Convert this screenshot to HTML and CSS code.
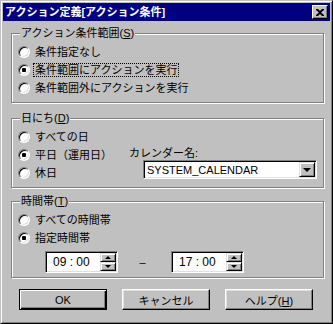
FILE: index.html
```html
<!DOCTYPE html>
<html lang="ja">
<head>
    <meta charset="UTF-8">
    <title>アクション定義[アクション条件]</title>
    <link rel="stylesheet" href="styles.css">
</head>
<body>

<div class="window">
    <div class="titlebar">
        <span class="title">アクション定義[アクション条件]</span>
        <span class="close">
            <svg width="8" height="7" viewBox="0 0 8 7">
                <path d="M0 0h2l2 2 2-2h2v1l-3 2.5 3 2.5v1h-2l-2-2-2 2h-2v-1l3-2.5-3-2.5z" fill="#000"/>
            </svg>
        </span>
    </div>

    <div class="content">
        <fieldset class="group">
            <legend>アクション条件範囲(<u>S</u>)</legend>
            <div class="radio"><span class="mark"></span><span class="text">条件指定なし</span></div>
            <div class="radio"><span class="mark checked"></span><span class="text focus">条件範囲にアクションを実行</span></div>
            <div class="radio"><span class="mark"></span><span class="text">条件範囲外にアクションを実行</span></div>
        </fieldset>

        <fieldset class="group group-date">
            <legend>日にち(<u>D</u>)</legend>
            <div class="date-row">
                <div class="date-left">
                    <div class="radio"><span class="mark"></span><span class="text">すべての日</span></div>
                    <div class="radio"><span class="mark checked"></span><span class="text">平日（運用日）</span></div>
                    <div class="radio"><span class="mark"></span><span class="text">休日</span></div>
                </div>
                <div class="date-right">
                    <div class="cal-label">カレンダー名:</div>
                    <div class="combo">
                        <span class="combo-value">SYSTEM_CALENDAR</span>
                        <span class="combo-btn"><span class="tri-down big"></span></span>
                    </div>
                </div>
            </div>
        </fieldset>

        <fieldset class="group group-time">
            <legend>時間帯(<u>T</u>)</legend>
            <div class="radio"><span class="mark"></span><span class="text">すべての時間帯</span></div>
            <div class="radio"><span class="mark checked"></span><span class="text">指定時間帯</span></div>
            <div class="time-row">
                <div class="spin">
                    <span class="spin-value">09 : 00</span>
                    <span class="spin-arrows">
                        <span class="arr"><span class="tri-up"></span></span>
                        <span class="arr"><span class="tri-down"></span></span>
                    </span>
                </div>
                <span class="dash">–</span>
                <div class="spin">
                    <span class="spin-value">17 : 00</span>
                    <span class="spin-arrows">
                        <span class="arr"><span class="tri-up"></span></span>
                        <span class="arr"><span class="tri-down"></span></span>
                    </span>
                </div>
            </div>
        </fieldset>

        <div class="buttons">
            <button class="btn default">OK</button>
            <button class="btn">キャンセル</button>
            <button class="btn">ヘルプ(<u>H</u>)</button>
        </div>
    </div>
</div>

</body>
</html>
```

FILE: styles.css
```css
* {
    box-sizing: border-box;
}
body {
    margin: 0;
    background-color: #c0c0c0;
    font-family: "Liberation Sans", "Noto Sans CJK JP", sans-serif;
    font-size: 11px;
    color: #000;
}
.window {
    width: 333px;
    height: 324px;
    padding: 2px;
    background: #c0c0c0;
    border: 1px solid;
    border-color: #c0c0c0 #000 #000 #c0c0c0;
    box-shadow: inset 1px 1px 0 #fff, inset -1px -1px 0 #808080;
}
.titlebar {
    height: 18px;
    display: flex;
    align-items: center;
    justify-content: space-between;
    padding: 0 2px;
    background: #000080;
    color: #fff;
    font-weight: bold;
    line-height: 18px;
}
.close {
    width: 16px;
    height: 14px;
    display: flex;
    align-items: center;
    justify-content: center;
    background: #c0c0c0;
    border: 1px solid;
    border-color: #fff #000 #000 #fff;
    box-shadow: inset -1px -1px 0 #808080;
}
.content {
    padding: 0 6px 0 8px;
}
.group {
    margin: 5px 0 0;
    padding: 3px 6px 5px;
    min-width: 0;
    border: 1px solid #808080;
    box-shadow: inset 1px 1px 0 #fff, 1px 1px 0 #fff;
}
.group-date {
    margin-top: 8px;
}
.group-time {
    margin-top: 6px;
    padding-bottom: 4px;
}
legend {
    margin-left: 2px;
    padding: 0 1px;
    line-height: 14px;
    background: #c0c0c0;
}
.radio {
    display: flex;
    align-items: center;
    height: 18px;
}
.mark {
    width: 12px;
    height: 12px;
    flex: none;
    border-radius: 50%;
    background: #fff;
    border: 1px solid;
    border-color: #808080 #fff #fff #808080;
    box-shadow: inset 1px 1px 0 #000, inset -1px -1px 0 #dfdfdf;
}
.mark.checked {
    background: radial-gradient(circle, #000 0 2px, #fff 2.5px);
}
.text {
    margin-left: 3px;
    padding: 0 1px;
    line-height: 12px;
    border: 1px dotted transparent;
    white-space: nowrap;
}
.text.focus {
    border-color: #000;
}
.date-row {
    display: flex;
}
.date-left {
    width: 111px;
}
.date-right {
    padding-top: 18px;
}
.cal-label {
    line-height: 14px;
}
.combo {
    width: 174px;
    height: 19px;
    margin-left: 14px;
    display: flex;
    align-items: center;
    padding: 1px;
    background: #fff;
    border: 1px solid;
    border-color: #808080 #fff #fff #808080;
    box-shadow: inset 1px 1px 0 #000, inset -1px -1px 0 #dfdfdf;
}
.combo-value {
    flex: 1;
    padding-left: 2px;
}
.combo-btn,
.arr {
    display: flex;
    align-items: center;
    justify-content: center;
    background: #c0c0c0;
    border: 1px solid;
    border-color: #dfdfdf #000 #000 #dfdfdf;
    box-shadow: inset 1px 1px 0 #fff, inset -1px -1px 0 #808080;
}
.combo-btn {
    width: 16px;
    height: 15px;
}
.tri-down,
.tri-up {
    width: 0;
    height: 0;
    border-left: 3px solid transparent;
    border-right: 3px solid transparent;
}
.tri-down {
    border-top: 3px solid #000;
}
.tri-up {
    border-bottom: 3px solid #000;
}
.tri-down.big {
    border-left-width: 4px;
    border-right-width: 4px;
    border-top-width: 4px;
}
.time-row {
    display: flex;
    align-items: center;
    margin-top: 4px;
    padding-left: 27px;
}
.spin {
    width: 73px;
    height: 22px;
    display: flex;
    padding: 1px;
    background: #fff;
    border: 1px solid;
    border-color: #808080 #fff #fff #808080;
    box-shadow: inset 1px 1px 0 #000, inset -1px -1px 0 #dfdfdf;
}
.spin-value {
    flex: 1;
    padding-left: 6px;
    font-size: 12px;
    line-height: 18px;
}
.spin-arrows {
    width: 16px;
    display: flex;
    flex-direction: column;
}
.arr {
    flex: 1;
}
.dash {
    width: 7px;
    margin: 0 25px 0 21px;
    text-align: center;
}
.buttons {
    display: flex;
    gap: 15px;
    margin-top: 11px;
    padding-left: 8px;
}
.btn {
    width: 88px;
    height: 21px;
    padding: 0;
    font-family: inherit;
    font-size: 11px;
    color: #000;
    background: #c0c0c0;
    border: 1px solid;
    border-color: #fff #000 #000 #fff;
    box-shadow: inset -1px -1px 0 #808080, inset 1px 1px 0 #dfdfdf;
}
.btn.default {
    border-color: #000;
    box-shadow: inset 1px 1px 0 #fff, inset -1px -1px 0 #000, inset -2px -2px 0 #808080;
}
```
